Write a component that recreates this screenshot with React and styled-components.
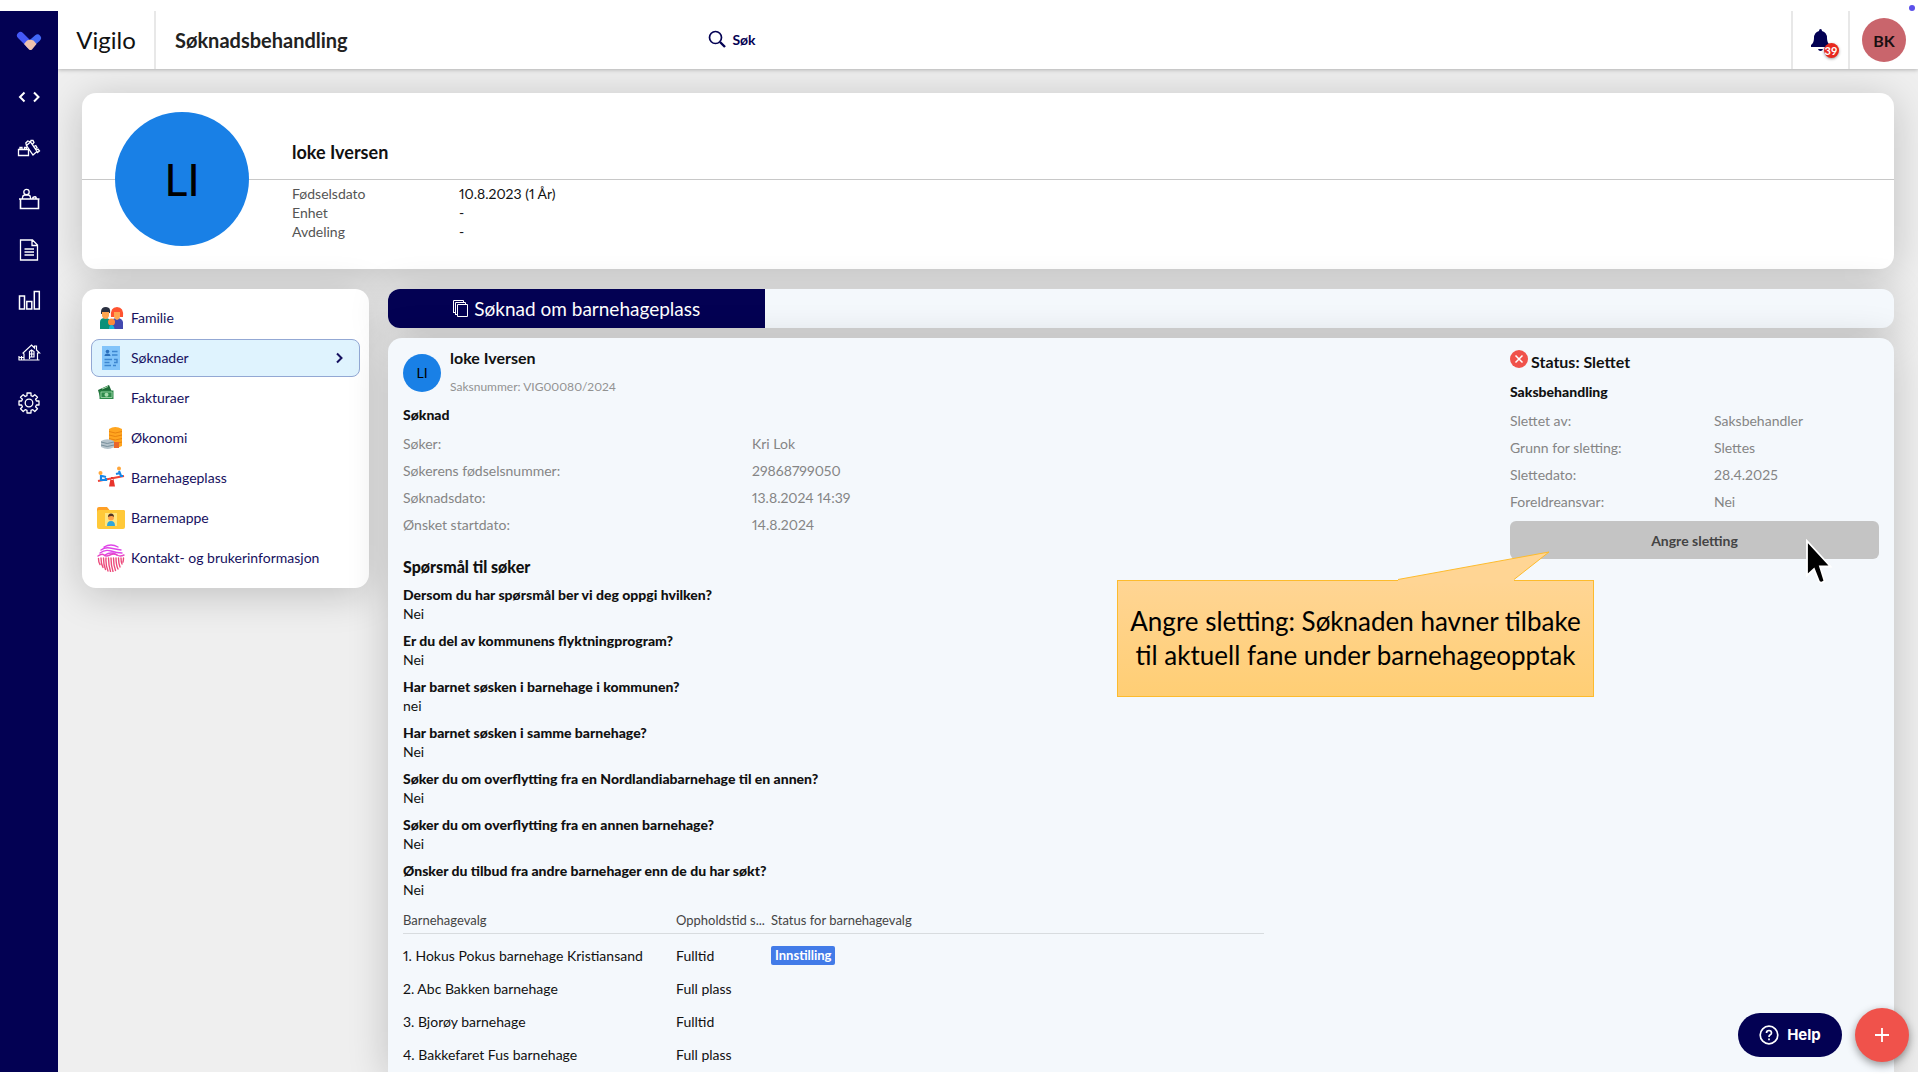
import React from 'react'
import styled, { createGlobalStyle } from 'styled-components'

const GlobalStyle = createGlobalStyle`
  * {
    box-sizing: border-box;
  }
  body {
    margin: 0;
    background: #fff;
    color: #111;
    font: 14px/20px Lato, 'Noto Sans', sans-serif;
    font-variant-numeric: proportional-nums;
  }
  h1, h2, h3, p, dl, dd, ul {
    margin: 0;
    padding: 0;
  }
  button {
    font-family: inherit;
    border: none;
    padding: 0;
    cursor: pointer;
  }
`
const Page = styled.div`
  height: 100vh;
  display: flex;
  padding: 11px 2px 8px 0;
  position: relative;
`
const RecordDot = styled.span`
  position: absolute;
  top: 5px;
  right: 5px;
  width: 6px;
  height: 6px;
  border-radius: 50%;
  background: #5b50ea;
`
const Sidebar = styled.nav`
  flex: 0 0 58px;
  display: flex;
  flex-direction: column;
  background: #030153;
`
const LogoLink = styled.a`
  height: 60px;
  display: flex;
  justify-content: center;
  align-items: center;
`
const SideLink = styled.a`
  height: 51px;
  display: flex;
  justify-content: center;
  align-items: center;
  color: #fff;
`
const Main = styled.div`
  flex: 1;
  min-width: 0;
  display: flex;
  flex-direction: column;
  background: #efefef;
  overflow: hidden;
`
const TopBar = styled.header`
  flex: 0 0 58px;
  display: flex;
  background: #fff;
  box-shadow: 0 1px 4px rgba(0, 0, 0, 0.25);
  z-index: 1;
`
const Brand = styled.div`
  width: 98px;
  display: flex;
  align-items: center;
  justify-content: center;
  font-size: 24px;
  border-right: 2px solid #e8e8e8;
`
const PageTitle = styled.h1`
  flex: 0 0 29%;
  padding-left: 19px;
  line-height: 58px;
  font-size: 20px;
  font-weight: 700;
  color: #222;
`
const SearchButton = styled.button`
  display: flex;
  align-items: center;
  gap: 6px;
  padding: 0 13px 2px;
  margin-right: auto;
  background: none;
  color: #030153;
  font-size: 14px;
  font-weight: 700;
`
const TopCell = styled.div`
  width: ${({ $wide }) => ($wide ? '70px' : '57px')};
  display: flex;
  align-items: center;
  justify-content: center;
  border-left: 2px solid #e8e8e8;
`
const BellButton = styled.button`
  position: relative;
  display: flex;
  background: none;
  color: #030153;
`
const BellCount = styled.span`
  position: absolute;
  top: 14px;
  left: 13px;
  width: 15px;
  height: 15px;
  border-radius: 50%;
  background: #e8281e;
  color: #fff;
  font: 700 11px/15px Lato, sans-serif;
  text-align: center;
  box-shadow: 0 1px 3px rgba(0, 0, 0, 0.4);
`
const UserButton = styled.button`
  width: 44px;
  height: 44px;
  border-radius: 50%;
  background: #c9656c;
  color: #1a1012;
  font-size: 16px;
  font-weight: 700;
`
const Content = styled.main`
  flex: 1;
  min-height: 0;
  display: flex;
  flex-direction: column;
  gap: 20px;
  padding: 24px 24px 0;
`
const Card = styled.section`
  background: #fff;
  border-radius: 14px;
  box-shadow: 0 6px 40px rgba(0, 0, 0, 0.2);
`
const ProfileCard = styled(Card)`
  display: flex;
  gap: 43px;
  padding: 19px 33px 23px;
  background: linear-gradient(#c8c8c8, #c8c8c8) 0 86px / 100% 1px no-repeat, #fff;
`
const Avatar = styled.div`
  flex: none;
  width: ${({ $size }) => $size}px;
  height: ${({ $size }) => $size}px;
  display: flex;
  align-items: center;
  justify-content: center;
  border-radius: 50%;
  background: #1980e6;
  color: #000;
  font-size: ${({ $size }) => ($size > 100 ? '45px' : '14px')};
`
const ProfileInfo = styled.div`
  padding-top: 28px;
`
const ProfileName = styled.h2`
  margin-bottom: 20px;
  font-size: 18px;
  line-height: 24px;
  font-weight: 700;
`
const ProfileFacts = styled.dl`
  display: grid;
  grid-template-columns: 167px auto;
  line-height: 19px;

  dt {
    color: #555;
  }
`
const Columns = styled.div`
  flex: 1;
  min-height: 0;
  display: flex;
  gap: 19px;
  align-items: flex-start;
`
const MenuCard = styled(Card)`
  flex: 0 0 287px;
  padding: 10px 9px 11px;
`
const Menu = styled.ul`
  display: flex;
  flex-direction: column;
  gap: 2px;
  list-style: none;
`
const MenuLink = styled.a`
  height: 38px;
  display: flex;
  align-items: center;
  gap: 6px;
  padding: 0 12px 0 5px;
  border: 1px solid ${({ $active }) => ($active ? '#93a8d4' : 'transparent')};
  border-radius: 8px;
  background: ${({ $active }) => ($active ? '#dff3fe' : 'transparent')};
  color: #161060;
  text-decoration: none;

  span {
    flex: 1;
  }
`
const CaseColumn = styled.div`
  flex: 1;
  min-width: 0;
  align-self: stretch;
  display: flex;
  flex-direction: column;
  gap: 10px;
`
const TabBar = styled.div`
  flex: 0 0 39px;
  display: flex;
  background: #f4f8fc;
  border-radius: 12px;
  overflow: hidden;
  box-shadow: 0 6px 40px rgba(0, 0, 0, 0.2);
`
const Tab = styled.button`
  width: 25%;
  display: flex;
  align-items: center;
  justify-content: center;
  gap: 5px;
  background: #030153;
  color: #fff;
  font-size: 19px;
`
const CaseCard = styled(Card)`
  flex: 1;
  display: grid;
  grid-template-columns: 7fr 2fr 3fr;
  padding: 10px 15px 0;
  border-radius: 14px 14px 0 0;
  background: #f4f8fc;
`
const Application = styled.div``
const Person = styled.div`
  display: flex;
  align-items: center;
  gap: 9px;
  margin-bottom: 8px;
`
const PersonName = styled.h2`
  margin-bottom: 9px;
  font-size: 16px;
  line-height: 20px;
`
const CaseNumber = styled.p`
  font-size: 12px;
  color: #929292;
`
const SmallHeading = styled.h3`
  margin-bottom: 5px;
  font-size: 14px;
  line-height: 20px;
  font-weight: 900;
`
const Fields = styled.dl`
  display: grid;
  grid-template-columns: ${({ $label }) => $label} auto;
  line-height: 27px;
  color: #858585;
`
const Heading = styled.h2`
  margin: 17px 0 6px;
  font-size: 16px;
  line-height: 24px;
  font-weight: 900;
`
const Questions = styled.dl`
  line-height: 19px;

  dt {
    font-weight: 900;
  }
  dd + dt {
    margin-top: 8px;
  }
`
const Choices = styled.table`
  width: 100%;
  table-layout: fixed;
  border-collapse: separate;
  border-spacing: 0;
  line-height: 19px;
  text-align: left;

  th {
    padding: 12px 0 3px;
    border-bottom: 1px solid #d8dcdf;
    font-size: 13px;
    font-weight: 400;
    color: #444;
    white-space: nowrap;
  }
  td {
    padding: 7px 0;
  }
  tbody tr:first-child td {
    padding-top: 11px;
  }
`
const Col = styled.col`
  width: ${({ $width }) => $width};
`
const Badge = styled.span`
  display: inline-block;
  padding: 0 4px;
  border-radius: 2px;
  background: #427be8;
  color: #fff;
  font-size: 13px;
  font-weight: 700;
`
const StatusPanel = styled.aside`
  grid-column: 3;
  position: relative;
  align-self: start;
  padding-top: 2px;
`
const StatusTitle = styled.h2`
  display: flex;
  align-items: flex-start;
  gap: 3px;
  margin-bottom: 8px;
  font-size: 16px;
  line-height: 24px;
`
const UndoButton = styled.button`
  width: 100%;
  height: 38px;
  margin-top: 6px;
  border-radius: 6px;
  background: #c4c4c4;
  color: #444;
  font-size: 14px;
  font-weight: 700;
`
const Callout = styled.div`
  position: absolute;
  top: 232px;
  right: 285px;
  width: 477px;
  height: 117px;
  display: flex;
  align-items: center;
  justify-content: center;
  padding-bottom: 2px;
  border: 1px solid #fdbb2d;
  background: linear-gradient(#ffd594, #ffce74);
  color: #000;
  font-size: 26px;
  line-height: 34px;
  text-align: center;
`
const CalloutTail = styled.svg`
  position: absolute;
  right: 43px;
  bottom: 113px;
`
const Pointer = styled.svg`
  position: absolute;
  top: 191px;
  right: 46px;
`
const FloatingActions = styled.div`
  position: absolute;
  right: 11px;
  bottom: 18px;
  display: flex;
  align-items: center;
  gap: 13px;
  z-index: 2;
`
const HelpButton = styled.button`
  width: 104px;
  height: 44px;
  display: flex;
  align-items: center;
  justify-content: center;
  gap: 8px;
  border-radius: 22px;
  background: #030153;
  color: #fff;
  font: 700 15px/20px Inter, sans-serif;
`
const AddButton = styled.button`
  width: 54px;
  height: 54px;
  display: flex;
  align-items: center;
  justify-content: center;
  border-radius: 50%;
  background: #f0524b;
  box-shadow: 0 3px 8px rgba(0, 0, 0, 0.4);
`

function LineIcon({ children }) {
  return (
    <svg width='24' height='24' viewBox='0 0 24 24' fill='none' stroke='currentColor' strokeWidth='1.3' aria-hidden='true'>
      {children}
    </svg>
  )
}

const sideLinks = [
  {
    label: 'Utvikler',
    icon: <path d='M7.500 7.500 3 12l4.500 4.500M17 7.500l4.500 4.500-4.500 4.500' strokeWidth='2' />
  },
  {
    label: 'Klosser',
    icon: (
      <>
        <path d='M1.500 13.500h10v6h-10zM3 13.500v-2h2v2M7.500 13.500v-2h2v2' />
        <path d='m9.500 9.500 4-3.500 6.500 9.500-4 3.500zM9.500 9.500 8.800 7l2-2 1.500.500 1.200.500M13.500 6l.500-1.500h2l1 2-1.300 1.500M16.800 10.500l2-1 1.200 2-1.500 1.300M19 14l2-1 1.500 2-2.500 2' />
      </>
    )
  },
  {
    label: 'Saksbehandling',
    icon: (
      <>
        <circle cx='9.500' cy='5' r='2.700' />
        <path d='M5.500 12v-1.500q0-2 2-2.500h4q2 .5 2 2.500V12' />
        <path d='M2 12h20.500M3.500 12v9.500h18V12M16 12v-1.500q2.500-1.500 3 0V12' strokeWidth='1.600' />
      </>
    )
  },
  {
    label: 'Dokumenter',
    icon: <path d='M3.500 2h12l5 5v15h-17zM15 2v5.500h5.500M7.500 11h9.500M7.500 14h9.500M7.500 17h9.500' />
  },
  {
    label: 'Rapporter',
    icon: <path d='M2.500 7h5v13h-5zM9.800 12.500h5V20h-5zM17.300 2.500h5V20h-5z' strokeWidth='1.500' />
  },
  {
    label: 'Barnehager',
    icon: (
      <path d='M1.500 20h21M2 17.500h5M2 20v-4M4.500 20v-4M7 20v-6L6 13l8.500-8 3 3V6h2v4l3 3h-2v7M12.500 19v-7.500l2-1.500 2.500 1.500V17h-4.500M14.700 10v7M12.500 14H17' strokeWidth='1.200' />
    )
  },
  {
    label: 'Innstillinger',
    icon: (
      <>
        <path d='M10 2h4v2.700l1.800.8 2-1.900 2.700 2.700-1.900 2 .8 1.700H22v4h-2.600l-.8 1.800 1.900 2-2.700 2.700-2-1.900-1.800.8V22h-4v-2.600l-1.800-.8-2 1.900-2.700-2.700 1.900-2-.8-1.800H2v-4h2.600l.8-1.700-1.900-2 2.700-2.700 2 1.900 1.800-.8z' strokeLinejoin='round' />
        <circle cx='12' cy='12' r='3.800' />
      </>
    )
  }
]

function MenuIcon({ children }) {
  return (
    <svg width='28' height='28' viewBox='0 0 28 28' aria-hidden='true'>
      {children}
    </svg>
  )
}

const menuItems = [
  {
    label: 'Familie',
    icon: (
      <>
        <path d='M3 25v-7q0-4 5-4t6 4v7z' fill='#0b9179' />
        <path d='M14 25v-7q1-4 6-4t6 4v7z' fill='#4349b0' />
        <path d='M14 13q-1-10 6-10t6 10z' fill='#ff5330' />
        <path d='M4 8q0-5 5-5t4 6l-9 1z' fill='#2b3040' />
        <path d='M5 8h7v4q-1 3-3.500 3T5 12zM17 8h6v5q-1 3-3 3t-3-3z' fill='#ffa54f' />
        <circle cx='14.500' cy='18' r='3.500' fill='#ff8b3d' />
        <path d='M12 25q0-4 2.500-4t3 4z' fill='#17b6d6' />
      </>
    )
  },
  {
    label: 'Søknader',
    active: true,
    icon: (
      <>
        <path d='M5 2h18v24H5z' fill='#82c4fa' />
        <circle cx='10.500' cy='7.500' r='1.800' fill='#2a6fbb' />
        <path d='M7.500 12q0-2.500 3-2.500t3 2.500z' fill='#2a6fbb' />
        <path d='M15 7.500h5.500M15 11h5.500M7.500 15.500H15M7.500 18.500h5M7.500 21.500H14M17 15.500h3v3h-3M16 21.500h3' stroke='#3d86d0' strokeWidth='1.400' fill='none' />
      </>
    )
  },
  {
    label: 'Fakturaer',
    icon: (
      <>
        <path d='m1 6 11-5 3 7L3 13z' fill='#1d6b37' />
        <path d='M2.500 6.500h14V15h-14z' fill='#2e8b4b' />
        <path d='M4 8h11v5.500H4z' fill='none' stroke='#a7dcae' strokeWidth='.8' />
        <circle cx='9.500' cy='10.700' r='2' fill='#a7dcae' />
        <path d='m5 5 6-2.500' stroke='#a7dcae' />
      </>
    )
  },
  {
    label: 'Økonomi',
    icon: (
      <>
        <path d='M12 5q6-4 13 0v17q-6 3-13 0z' fill='#ffa51f' />
        <path d='M12 7.500q6 3 13 0M12 11q6 3 13 0M12 14.500q6 3 13 0M12 18q6 3 13 0' stroke='#e9830f' fill='none' />
        <path d='M17 18h5v6h-5z' fill='#e9672c' />
        <path d='M4 17q6-3.500 13 0v6q-6 4-13 0z' fill='#b5c3cb' />
        <path d='M4 18q6 3 13 0M4 21q6 3 13 0' stroke='#788f9b' fill='none' />
      </>
    )
  },
  {
    label: 'Barnehageplass',
    icon: (
      <>
        <path d='m1 17 26-5' stroke='#ef4437' strokeWidth='1.800' />
        <path d='M12 22.500h6L16.500 15h-3zM14 13h2v3h-2z' fill='#e8342c' />
        <circle cx='3.500' cy='9' r='2' fill='#ffa63a' />
        <circle cx='22' cy='4.500' r='2' fill='#ffa63a' />
        <path d='M4 11v5h5v-2M22 7l2 5h2M5 12l4 1M19 10l4-1' stroke='#1587e8' strokeWidth='2.200' fill='none' />
      </>
    )
  },
  {
    label: 'Barnemappe',
    icon: (
      <>
        <path d='M0 5q0-2 2-2h8l2.500 3H26q2 0 2 2v2H0z' fill='#ffa026' />
        <rect y='6' width='28' height='19' rx='2' fill='#ffc939' />
        <path d='M8 9h12v13H8z' fill='#ffe680' />
        <path d='M10 22q0-5 4-5t4 5z' fill='#2fa6db' />
        <circle cx='14' cy='13.500' r='3' fill='#ffa24b' />
        <path d='M11 13q0-3.500 3-3.500t3 3.500q-2-2-6 0z' fill='#513324' />
      </>
    )
  },
  {
    label: 'Kontakt- og brukerinformasjon',
    icon: (
      <g fill='none' strokeWidth='1.400' strokeLinecap='round'>
        <path d='M7 3q7-4 14 0M4 6q4-3 9-2t11 2M3 9q5-4 11-2t11 2M8 11q6-4 12 0' stroke='#df45e8' />
        <path d='M1 12q4-3 6-1t6 0q4-2 7 0t7 0' stroke='#e647c4' />
        <path d='M1.500 14.500q0 4 1.500 6M4 14q0 6 2 9.500M6.500 14q0 7 2 11.500M9 14q-.5 7 2 13M11.500 14q0 7 2 13.500M14 14q0 8 2 13.500M16.500 14q0 7 2 12.500M19 14q0 7 2 11M21.500 14q0 5 1.500 9M24 14q0 4 1 6M26.500 14q0 2-.5 4' stroke='#ec4a7b' />
      </g>
    )
  }
]

const profileFacts = [
  ['Fødselsdato', '10.8.2023 (1 År)'],
  ['Enhet', '-'],
  ['Avdeling', '-']
]
const applicationFields = [
  ['Søker:', 'Kri Lok'],
  ['Søkerens fødselsnummer:', '29868799050'],
  ['Søknadsdato:', '13.8.2024 14:39'],
  ['Ønsket startdato:', '14.8.2024']
]
const statusFields = [
  ['Slettet av:', 'Saksbehandler'],
  ['Grunn for sletting:', 'Slettes'],
  ['Slettedato:', '28.4.2025'],
  ['Foreldreansvar:', 'Nei']
]
const questions = [
  ['Dersom du har spørsmål ber vi deg oppgi hvilken?', 'Nei'],
  ['Er du del av kommunens flyktningprogram?', 'Nei'],
  ['Har barnet søsken i barnehage i kommunen?', 'nei'],
  ['Har barnet søsken i samme barnehage?', 'Nei'],
  ['Søker du om overflytting fra en Nordlandiabarnehage til en annen?', 'Nei'],
  ['Søker du om overflytting fra en annen barnehage?', 'Nei'],
  ['Ønsker du tilbud fra andre barnehager enn de du har søkt?', 'Nei']
]
const choices = [
  { name: '1. Hokus Pokus barnehage Kristiansand', time: 'Fulltid', status: 'Innstilling' },
  { name: '2. Abc Bakken barnehage', time: 'Full plass' },
  { name: '3. Bjorøy barnehage', time: 'Fulltid' },
  { name: '4. Bakkefaret Fus barnehage', time: 'Full plass' }
]

function Pairs({ items }) {
  return items.map(([label, value]) => (
    <React.Fragment key={label}>
      <dt>{label}</dt>
      <dd>{value}</dd>
    </React.Fragment>
  ))
}

function SideNav() {
  return (
    <Sidebar>
      <LogoLink href='#' aria-label='Vigilo'>
        <svg width='26' height='20' viewBox='0 0 26 20' fill='none' strokeLinecap='round'>
          <path d='m21.500 7-8 7' stroke='#4167f5' strokeWidth='7' />
          <path d='m4.500 4.500 9 9' stroke='#4458f7' strokeWidth='7' />
          <path d='m8 13 3-3.500q3-1.500 6.500 0l3 3.500-4.500 5.500q-1.500 1-3 0z' fill='#f0c3ae' />
        </svg>
      </LogoLink>
      {sideLinks.map(({ label, icon }) => (
        <SideLink key={label} href='#' aria-label={label}>
          <LineIcon>{icon}</LineIcon>
        </SideLink>
      ))}
    </Sidebar>
  )
}

function Header() {
  return (
    <TopBar>
      <Brand>Vigilo</Brand>
      <PageTitle>Søknadsbehandling</PageTitle>
      <SearchButton type='button'>
        <svg width='18' height='18' viewBox='0 0 18 18' fill='none' stroke='currentColor' aria-hidden='true'>
          <circle cx='7.500' cy='7.500' r='6' strokeWidth='1.700' />
          <path d='m12 12 5 5' strokeWidth='2.400' />
        </svg>
        Søk
      </SearchButton>
      <TopCell>
        <BellButton type='button' aria-label='Varsler'>
          <svg width='20' height='23' viewBox='0 0 20 23' fill='currentColor' aria-hidden='true'>
            <path d='M9.500 0q1.500 0 1.500 2 5 1.500 5 7 0 5 3 7v2H0v-2q3-2 3-7 0-5.500 5-7 0-2 1.500-2zM7 20h5q-.5 2-2.500 2T7 20z' />
          </svg>
          <BellCount>39</BellCount>
        </BellButton>
      </TopCell>
      <TopCell $wide>
        <UserButton type='button'>BK</UserButton>
      </TopCell>
    </TopBar>
  )
}

function ChildMenu() {
  return (
    <MenuCard as='nav'>
      <Menu>
        {menuItems.map(({ label, icon, active }) => (
          <li key={label}>
            <MenuLink href='#' $active={active}>
              <MenuIcon>{icon}</MenuIcon>
              <span>{label}</span>
              {active && (
                <svg width='14' height='14' viewBox='0 0 14 14' fill='none' stroke='currentColor' strokeWidth='2'>
                  <path d='m4 2.500 4.500 4.500L4 11.500' />
                </svg>
              )}
            </MenuLink>
          </li>
        ))}
      </Menu>
    </MenuCard>
  )
}

function ChoiceTable() {
  return (
    <Choices>
      <colgroup>
        <Col $width='273px' />
        <Col $width='95px' />
        <Col $width='auto' />
      </colgroup>
      <thead>
        <tr>
          <th>Barnehagevalg</th>
          <th>Oppholdstid s...</th>
          <th>Status for barnehagevalg</th>
        </tr>
      </thead>
      <tbody>
        {choices.map(({ name, time, status }) => (
          <tr key={name}>
            <td>{name}</td>
            <td>{time}</td>
            <td>{status && <Badge>{status}</Badge>}</td>
          </tr>
        ))}
      </tbody>
    </Choices>
  )
}

function Status() {
  return (
    <StatusPanel>
      <StatusTitle>
        <svg width='18' height='18' viewBox='0 0 18 18' aria-hidden='true'>
          <circle cx='9' cy='9' r='9' fill='#f0524b' />
          <path d='m5.500 5.500 7 7M12.500 5.500l-7 7' stroke='#fff' strokeWidth='1.500' />
        </svg>
        Status: Slettet
      </StatusTitle>
      <SmallHeading>Saksbehandling</SmallHeading>
      <Fields $label='204px'>
        <Pairs items={statusFields} />
      </Fields>
      <UndoButton type='button'>Angre sletting</UndoButton>
      <Callout>
        <CalloutTail width='156' height='32' viewBox='0 0 156 32'>
          <path d='M4 28.500 155 1 120 28.500V32H4z' fill='#ffd594' />
          <path d='M4 28.500 155 1 120 28.500' fill='none' stroke='#fdbb2d' />
        </CalloutTail>
        Angre sletting: Søknaden havner tilbake
        <br />
        til aktuell fane under barnehageopptak
      </Callout>
      <Pointer width='28' height='46' viewBox='0 0 28 46' aria-hidden='true'>
        <path d='M2 2v34.500l7-6.500 5 12.500q2 2.500 5.500-.5L15 27.500h10.500z' fill='#000' stroke='#fff' strokeWidth='1.800' />
      </Pointer>
    </StatusPanel>
  )
}

function App() {
  return (
    <Page>
      <GlobalStyle />
      <RecordDot />
      <SideNav />
      <Main>
        <Header />
        <Content>
          <ProfileCard>
            <Avatar $size={134}>LI</Avatar>
            <ProfileInfo>
              <ProfileName>loke Iversen</ProfileName>
              <ProfileFacts>
                <Pairs items={profileFacts} />
              </ProfileFacts>
            </ProfileInfo>
          </ProfileCard>
          <Columns>
            <ChildMenu />
            <CaseColumn>
              <TabBar>
                <Tab type='button'>
                  <svg width='17' height='19' viewBox='0 0 17 19' fill='none' stroke='currentColor' aria-hidden='true'>
                    <path d='M5.500 5.500h10v12h-10zM3.500 15.500v-12h10v2M1.500 13.500V1.500h10v2M1 13.500h2.500M3 15.500h2.500' />
                  </svg>
                  Søknad om barnehageplass
                </Tab>
              </TabBar>
              <CaseCard>
                <Application>
                  <Person>
                    <Avatar $size={38}>LI</Avatar>
                    <div>
                      <PersonName>loke Iversen</PersonName>
                      <CaseNumber>Saksnummer: VIG00080/2024</CaseNumber>
                    </div>
                  </Person>
                  <SmallHeading>Søknad</SmallHeading>
                  <Fields $label='349px'>
                    <Pairs items={applicationFields} />
                  </Fields>
                  <Heading>Spørsmål til søker</Heading>
                  <Questions>
                    <Pairs items={questions} />
                  </Questions>
                  <ChoiceTable />
                </Application>
                <Status />
              </CaseCard>
            </CaseColumn>
          </Columns>
        </Content>
      </Main>
      <FloatingActions>
        <HelpButton type='button'>
          <svg width='20' height='20' viewBox='0 0 20 20' fill='none' stroke='currentColor' strokeWidth='1.700' aria-hidden='true'>
            <circle cx='10' cy='10' r='8.800' />
            <path d='M7.500 8q0-2.500 2.500-2.500T12.500 8q0 1.200-1.500 2-1 .6-1 2' />
            <path d='M10 13.500v1.800' />
          </svg>
          Help
        </HelpButton>
        <AddButton type='button' aria-label='Legg til'>
          <svg width='14' height='14' viewBox='0 0 14 14' stroke='#fff' strokeWidth='1.800'>
            <path d='M7 0v14M0 7h14' />
          </svg>
        </AddButton>
      </FloatingActions>
    </Page>
  )
}

export default App
